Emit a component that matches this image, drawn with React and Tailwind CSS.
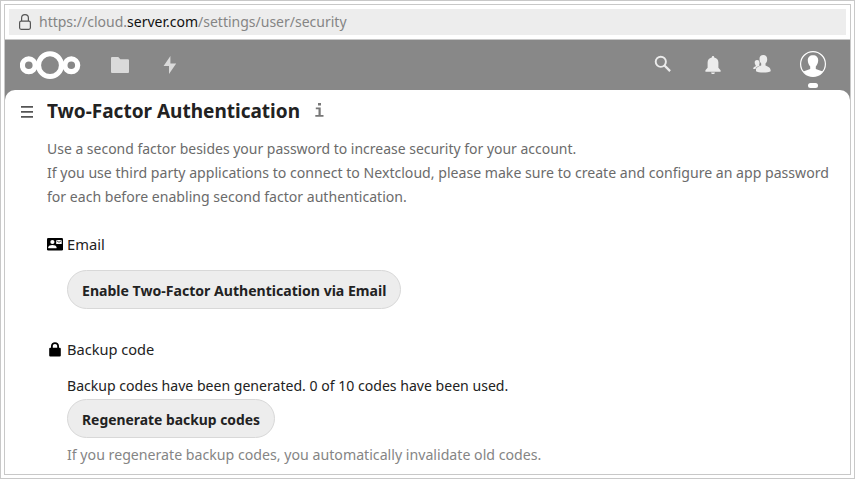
function Header() {
  return (
    <header className="flex h-[50px] shrink-0 items-center text-white">
      <svg className="ml-[15px] h-[30px] w-[61px] shrink-0" viewBox="0 0 61 30" fill="none" stroke="currentColor">
        <circle cx="30" cy="15.2" r="11.4" strokeWidth="5" />
        <circle cx="8.8" cy="15.3" r="6.4" strokeWidth="5.2" />
        <circle cx="51.3" cy="15.3" r="6.4" strokeWidth="5.2" />
      </svg>
      <svg className="ml-[30px] h-4 w-[18px] shrink-0" viewBox="0 0 18 16" fill="#dadada">
        <path d="M0.7 0H7.3L9.3 2.3H17.3L18 3V15.3L17.3 16H0.7L0 15.3V0.7Z" />
      </svg>
      <svg className="ml-[34px] h-[18px] w-[14px] shrink-0" viewBox="0 0 14 18" fill="#dadada">
        <path d="M7.4 0L0.6 10H6L6 18L13.2 7.4H7.4Z" />
      </svg>
      <div className="grow" />
      <svg className="mb-[2px] mr-[33px] h-[18px] w-[18px] shrink-0" viewBox="0 0 18 18" fill="none" stroke="#ececec">
        <circle cx="6.8" cy="6.8" r="5.1" strokeWidth="1.9" />
        <path d="M10.5 10.5L16.1 16.1" strokeWidth="2.3" />
      </svg>
      <svg className="mb-px mr-[32px] h-[18px] w-4 shrink-0" viewBox="0 0 16 18" fill="#ececec">
        <path d="M8 0C7 0 6.8 0.7 6.8 1.4C4 1.9 2.6 4 2.6 6.5V11.8L0.4 14.2V15.8H15.6V14.2L13.4 11.8V6.5C13.4 4 12 1.9 9.2 1.4C9.2 0.7 9 0 8 0ZM6.1 16.5H9.9C9.9 17.5 9.1 18 8 18S6.1 17.5 6.1 16.5Z" />
      </svg>
      <svg className="mb-[2px] mr-[29px] h-[18px] w-[18px] shrink-0" viewBox="0 0 18 18" fill="#ececec">
        <path d="M10.3 0C7.7 0 6.4 1.7 6.5 4.2C6.6 6.4 7.4 7.6 8.2 8.6V10.5C6.2 11.3 3.5 12.1 3 13.7V16.3C5 18 15.5 18 17.7 16.3C17.8 12.7 15.5 11.7 12.5 10.5V8.6C13.4 7.6 14.2 6.4 14.2 4.2C14.2 1.7 12.9 0 10.3 0Z" />
        <path d="M4.1 5.1C2.4 5.1 1.6 6.2 1.7 7.8C1.8 9 2.2 9.7 2.7 10.3V11.2C1.3 11.7 0.2 12.1 0.2 14H2.4C2.8 12.3 4.3 11.5 7 10.5L6.1 10.3C6.5 9.4 6.6 8.7 6.5 7.3C6.4 5.9 5.4 5.1 4.1 5.1Z" />
      </svg>
      <div className="relative mr-[24px] h-[26px] w-[26px] shrink-0">
        <svg className="h-[26px] w-[26px] -translate-y-px" viewBox="0 0 26 26" fill="currentColor">
          <circle cx="13" cy="13" r="12.4" fill="none" stroke="currentColor" strokeWidth="1.2" />
          <path d="M13 4.2C9.7 4.2 7.7 6.2 7.8 9.5C7.9 12.2 8.8 13.8 10.2 15.5V18L3.3 20.5C5.4 23.6 8.9 25.3 13 25.3S20.6 23.6 22.7 20.5L15.8 18V15.5C17.2 13.8 18.1 12.2 18.2 9.5C18.3 6.2 16.3 4.2 13 4.2Z" />
        </svg>
        <div className="absolute left-2 top-[31px] h-[5px] w-[10px] rounded-full bg-white" />
      </div>
    </header>
  );
}

function PillButton({ children, className, textClass }) {
  return (
    <button className={`flex h-[39px] items-center whitespace-nowrap rounded-full border border-[#d8d8d8] bg-[#ededed] pl-[14px] pt-[2px] text-left text-[15px] font-bold text-[#222] ${className}`}>
      <span className={`block origin-left ${textClass}`}>{children}</span>
    </button>
  );
}

export default function App() {
  return (
    <div className="h-[479px] w-[855px] overflow-hidden border border-[#c8c8c8] bg-white p-[3px] font-['Noto_Sans',sans-serif] text-[15px] text-[#222]">
      <div className="flex h-full flex-col border border-[#c8c8c8]">
        <div className="h-[35px] shrink-0 border-b border-[#c8c8c8] p-1">
          <div className="flex h-[26px] items-center bg-[#ededed] text-[#858585]">
            <svg className="ml-[10px] h-4 w-3 shrink-0" viewBox="0 0 12 16" fill="none" stroke="#555" strokeWidth="1.2">
              <rect x="0.6" y="7.2" width="10.8" height="8.1" rx="1.5" />
              <path d="M2.6 7V4C2.6 1.8 4 0.6 6 0.6S9.4 1.8 9.4 4V7" />
            </svg>
            <span className="ml-2 whitespace-nowrap text-[14px] leading-[26px]">
              https://cloud.<span className="text-[#111]">server.com</span>/settings/user/security
            </span>
          </div>
        </div>
        <div className="flex min-h-0 grow flex-col bg-[#888]">
          <Header />
          <main className="min-h-0 grow rounded-t-[10px] bg-white">
            <div className="flex h-[43px] items-center">
              <svg className="ml-4 h-3 w-3 shrink-0" viewBox="0 0 12 12" fill="#555">
                <path d="M0 0H12V1.7H0ZM0 5H12V6.7H0ZM0 10H12V11.7H0Z" />
              </svg>
              <h1 className="mb-[2px] ml-[14px] w-[253px] whitespace-nowrap text-[20px] font-bold leading-[41px]">
                <span className="block w-max origin-left scale-x-[.95]">Two-Factor Authentication</span>
              </h1>
              <svg className="mb-[3px] ml-[15px] h-[14px] w-[9px] shrink-0" viewBox="0 0 9 14" fill="#777">
                <path d="M3 0H6V2.6H3ZM0.8 4.6H5.7V12H8.5V13.8H0.3V12H3.5V6.3H0.8Z" />
              </svg>
            </div>
            <p className="ml-[42px] mt-[3px] whitespace-nowrap text-[15px] leading-6 text-[#6b6b6b]">
              <span className="block w-max origin-left scale-x-[.931]">Use a second factor besides your password to increase security for your account.</span>
              <span className="block w-max origin-left scale-x-[.94]">If you use third party applications to connect to Nextcloud, please make sure to create and configure an app password</span>
              <span className="block w-max origin-left scale-x-[.938]">for each before enabling second factor authentication.</span>
            </p>
            <h2 className="ml-[42px] mt-6 flex h-6 items-center">
              <svg className="mr-1 h-[13px] w-4" viewBox="0 0 16 13">
                <rect width="16" height="12.5" rx="1.3" />
                <g fill="white">
                  <circle cx="5.4" cy="4" r="2.1" />
                  <path d="M1.3 10.3V9.3C1.3 7.8 3.5 7.1 5.4 7.1S9.5 7.8 9.5 9.3V10.3Z" />
                  <path d="M9.2 2H14.7V6H9.2Z" />
                </g>
                <path d="M9.5 2.6L12 4.3L14.4 2.6" fill="none" stroke="black" strokeWidth="0.7" />
              </svg>
              <span className="block origin-left scale-x-[.98]">Email</span>
            </h2>
            <PillButton className="ml-[62px] mt-[14px] w-[334px]" textClass="scale-x-[.938]">Enable Two-Factor Authentication via Email</PillButton>
            <h2 className="ml-[42px] mt-7 flex h-6 items-center">
              <svg className="ml-[2px] mr-[6px] h-[15px] w-3" viewBox="0 0 12 15">
                <path fillRule="evenodd" d="M1.3 5.7H2V4C2 1.7 3.7 0.2 6 0.2S10 1.7 10 4V5.7H10.7Q11.8 5.7 11.8 6.8V13.4Q11.8 14.5 10.7 14.5H1.3Q0.2 14.5 0.2 13.4V6.8Q0.2 5.7 1.3 5.7ZM3.8 5.7H8.2V4C8.2 2.8 7.3 1.9 6 1.9S3.8 2.8 3.8 4Z" />
              </svg>
              <span className="block origin-left scale-x-[.973]">Backup code</span>
            </h2>
            <div className="ml-[62px] mt-3 whitespace-nowrap">
              <p className="w-max origin-left scale-x-[.938] leading-6">Backup codes have been generated. 0 of 10 codes have been used.</p>
              <PillButton className="mt-[2px] w-[208px]" textClass="scale-x-[.925]">Regenerate backup codes</PillButton>
              <p className="mt-1 w-max origin-left scale-x-[.944] leading-6 text-[#858585]">If you regenerate backup codes, you automatically invalidate old codes.</p>
            </div>
          </main>
        </div>
      </div>
    </div>
  );
}
